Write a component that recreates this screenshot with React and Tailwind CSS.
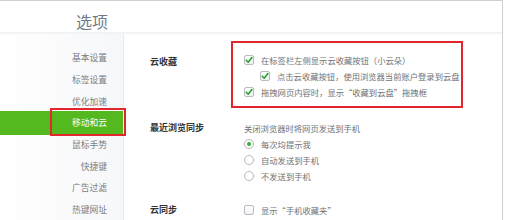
import React from 'react'

const FONT = { fontFamily: '"Noto Sans CJK SC", "Noto Sans", sans-serif' }

const MENU = ['基本设置', '标签设置', '优化加速', '移动和云', '鼠标手势', '快捷键', '广告过滤', '热键网址']

function Check({ checked }) {
  return (
    <span className="flex items-center justify-center w-[10px] h-[10px] shrink-0 rounded-[2px] border border-[#b9bcc0] bg-gradient-to-b from-white to-[#eef0f2]">
      {checked && (
        <svg width="8" height="8" viewBox="0 0 8 8">
          <path d="M1.2 4.2 L3.2 6.2 L6.9 1.6" fill="none" stroke="#2e9e2e" strokeWidth="1.6" strokeLinecap="round" strokeLinejoin="round" />
        </svg>
      )}
    </span>
  )
}

function Radio({ checked }) {
  return (
    <span className="flex items-center justify-center w-[10px] h-[10px] shrink-0 rounded-full border border-[#b4b7bb] bg-white">
      {checked && <span className="w-[4px] h-[4px] rounded-full bg-[#35b035]" />}
    </span>
  )
}

function Row({ children, indent }) {
  return <div className={`flex items-center h-[16px] ${indent ? 'pl-[16px]' : ''}`}>{children}</div>
}

function Label({ children }) {
  return <span className="ml-[7px] text-[8.3px] leading-none text-[#6f7276] whitespace-nowrap">{children}</span>
}

export default function App() {
  return (
    <div className="w-[507px] h-[220px] overflow-hidden bg-white flex" style={FONT}>
      <div className="w-[503px] h-full border-t border-r border-[#cfd1d4] flex flex-col">
        <div className="h-[33px] shrink-0 border-b-2 border-[#f2f3f5] pl-[76px] pt-[8px]">
          <span className="text-[16px] leading-[20px] text-[#6f7a88]">选项</span>
        </div>
        <div className="flex flex-1 min-h-0">
          <div className="w-[124px] shrink-0 border-r border-[#e9ebee] bg-gradient-to-r from-white to-[#f6f7f9] pt-[13px]">
            {MENU.map((m) =>
              m === '移动和云' ? (
                <div key={m} className="relative h-[24px] -my-[1.15px] bg-[#54b81f] flex items-center justify-end pr-[16px]">
                  <span className="text-[8.75px] text-white">{m}</span>
                  <div className="absolute left-[50px] top-[-3px] w-[76px] h-[28px] border-2 border-[#e2262d]" />
                </div>
              ) : (
                <div key={m} className="h-[21.7px] flex items-center justify-end pr-[16px]">
                  <span className="text-[8.75px] text-[#7a7d81]">{m}</span>
                </div>
              )
            )}
          </div>
          <div className="flex-1 pl-[26px] pt-[7px]">
            <div className="flex">
              <div className="w-[81px] pt-[14px] text-[9px] font-bold text-[#333]">云收藏</div>
              <div className="w-[232px] h-[67px] border-2 border-[#e2262d] pl-[11px] pt-[9px]">
                <Row><Check checked /><Label>在标签栏左侧显示云收藏按钮（小云朵）</Label></Row>
                <Row indent><Check checked /><Label>点击云收藏按钮，使用浏览器当前账户登录到云盘</Label></Row>
                <Row><Check checked /><Label>拖拽网页内容时，显示“收藏到云盘”拖拽框</Label></Row>
              </div>
            </div>
            <div className="flex mt-[12px]">
              <div className="w-[94px] h-[16px] flex items-center text-[9px] font-bold text-[#333]">最近浏览同步</div>
              <div>
                <div className="h-[16px] flex items-center text-[8.3px] text-[#6f7276]">关闭浏览器时将网页发送到手机</div>
                <Row><Radio checked /><Label>每次均提示我</Label></Row>
                <Row><Radio /><Label>自动发送到手机</Label></Row>
                <Row><Radio /><Label>不发送到手机</Label></Row>
              </div>
            </div>
            <div className="flex mt-[18px]">
              <div className="w-[94px] h-[16px] flex items-center text-[9px] font-bold text-[#333]">云同步</div>
              <Row><Check /><Label>显示“手机收藏夹”</Label></Row>
            </div>
          </div>
        </div>
      </div>
      <div className="flex-1 bg-white" />
    </div>
  )
}
